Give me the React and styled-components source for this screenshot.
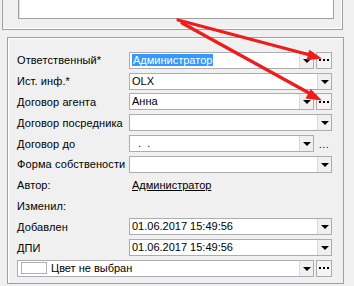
import React from 'react';
import styled, { createGlobalStyle } from 'styled-components';

const GlobalStyle = createGlobalStyle`
  html, body {
    margin: 0;
    padding: 0;
    background: #f0f0f0;
  }
  body {
    font-family: 'Liberation Sans', Arial, sans-serif;
    font-size: 11px;
    color: #000;
  }
`;

const Page = styled.div`
  position: relative;
  width: 354px;
  height: 286px;
  overflow: hidden;
`;

const TopPanel = styled.div`
  margin-left: 2px;
  width: 341px;
  height: 30px;
  border: 1px solid #a0a0a0;
  border-top: none;
  box-shadow: inset -1px -1px 0 #fff;
  padding-left: 15px;
  box-sizing: border-box;
`;

const Memo = styled.div`
  width: 316px;
  height: 19px;
  background: #fff;
  border: 1px solid #a0a0a0;
  border-top: none;
  box-sizing: border-box;
  box-shadow: inset 1px 0 0 #e3e3e3;
`;

const BottomPanel = styled.div`
  margin: 7px 0 0 7px;
  width: 337px;
  height: 247px;
  border: 1px solid #a0a0a0;
  box-shadow: inset 1px 1px 0 #fff;
  box-sizing: border-box;
  padding: 12px 10px 0 9px;
`;

const Form = styled.div`
  display: grid;
  grid-template-columns: 112px 203px;
  grid-auto-rows: 20.8px;
  align-items: center;
`;

const Label = styled.div`
  white-space: nowrap;
  letter-spacing: 0.1px;
`;

const Field = styled.div`
  display: flex;
  align-items: center;
  gap: 2px;
  grid-column: ${(p) => (p.$full ? '1 / -1' : 'auto')};
`;

const Input = styled.div`
  flex: 1;
  height: 17px;
  display: flex;
  align-items: center;
  background: #fff;
  border: 1px solid #abadb3;
  box-sizing: border-box;
  padding-left: 2px;
  min-width: 0;
`;

const Value = styled.span`
  flex: 1;
  white-space: nowrap;
  overflow: hidden;
  line-height: 15px;
`;

const Selected = styled.span`
  background: #3399ff;
  color: #fff;
  padding: 0 1px;
`;

const DropButton = styled.div`
  width: 14px;
  height: 15px;
  display: flex;
  align-items: center;
  justify-content: center;
  background: #f0f0f0;
  border-left: 1px solid #d8d8d8;
  box-sizing: border-box;
  flex: none;
`;

const Triangle = styled.span`
  width: 0;
  height: 0;
  border-left: 4px solid transparent;
  border-right: 4px solid transparent;
  border-top: 4px solid #000;
  margin-top: 1px;
`;

const DotsButton = styled.div`
  width: 16px;
  height: 17px;
  flex: none;
  display: flex;
  align-items: center;
  justify-content: center;
  gap: 2px;
  background: #f4f4f4;
  border: 1px solid #acacac;
  box-sizing: border-box;
`;

const Dot = styled.span`
  width: 2px;
  height: 2px;
  background: #000;
`;

const PlainDots = styled.div`
  width: 16px;
  flex: none;
  text-align: center;
  font-size: 11px;
  letter-spacing: 0.5px;
  color: #222;
  line-height: 10px;
`;

const LinkText = styled.span`
  text-decoration: underline;
  padding-left: 3px;
  color: #000;
`;

const Swatch = styled.span`
  width: 26px;
  height: 12px;
  background: #fff;
  border: 1px solid #b0b0b0;
  box-sizing: border-box;
  margin: 0 4px 0 1px;
  flex: none;
`;

const Arrows = styled.svg`
  position: absolute;
  left: 0;
  top: 0;
  pointer-events: none;
`;

const Dots = () => (
  <DotsButton>
    <Dot />
    <Dot />
    <Dot />
  </DotsButton>
);

const Combo = ({ children, dots, plainDots }) => (
  <Field>
    <Input>
      <Value>{children}</Value>
      <DropButton>
        <Triangle />
      </DropButton>
    </Input>
    {dots && <Dots />}
    {plainDots && <PlainDots>...</PlainDots>}
  </Field>
);

export default function App() {
  return (
    <Page>
      <GlobalStyle />
      <TopPanel>
        <Memo />
      </TopPanel>
      <BottomPanel>
        <Form>
          <Label>Ответственный*</Label>
          <Combo dots>
            <Selected>Администратор</Selected>
          </Combo>

          <Label>Ист. инф.*</Label>
          <Combo>OLX</Combo>

          <Label>Договор агента</Label>
          <Combo dots>Анна</Combo>

          <Label>Договор посредника</Label>
          <Combo />

          <Label>Договор до</Label>
          <Combo plainDots>&nbsp;&nbsp;.&nbsp;&nbsp;.</Combo>

          <Label>Форма собствености</Label>
          <Combo />

          <Label>Автор:</Label>
          <Field>
            <LinkText>Администратор</LinkText>
          </Field>

          <Label>Изменил:</Label>
          <Field />

          <Label>Добавлен</Label>
          <Combo>01.06.2017 15:49:56</Combo>

          <Label>ДПИ</Label>
          <Combo>01.06.2017 15:49:56</Combo>

          <Field $full>
            <Input>
              <Swatch />
              <Value>Цвет не выбран</Value>
              <DropButton>
                <Triangle />
              </DropButton>
            </Input>
            <Dots />
          </Field>
        </Form>
      </BottomPanel>
      <Arrows width="354" height="286" viewBox="0 0 354 286">
        <g stroke="#ee1c1c" strokeWidth="3.2" strokeLinecap="round">
          <line x1="178" y1="20" x2="310" y2="55" />
          <line x1="182" y1="23" x2="309" y2="93" />
        </g>
        <g fill="#ee1c1c">
          <polygon points="322,58.5 306.5,60.3 309.3,49.7" />
          <polygon points="322,100.5 305.5,98.5 310.8,88.9" />
        </g>
      </Arrows>
    </Page>
  );
}
